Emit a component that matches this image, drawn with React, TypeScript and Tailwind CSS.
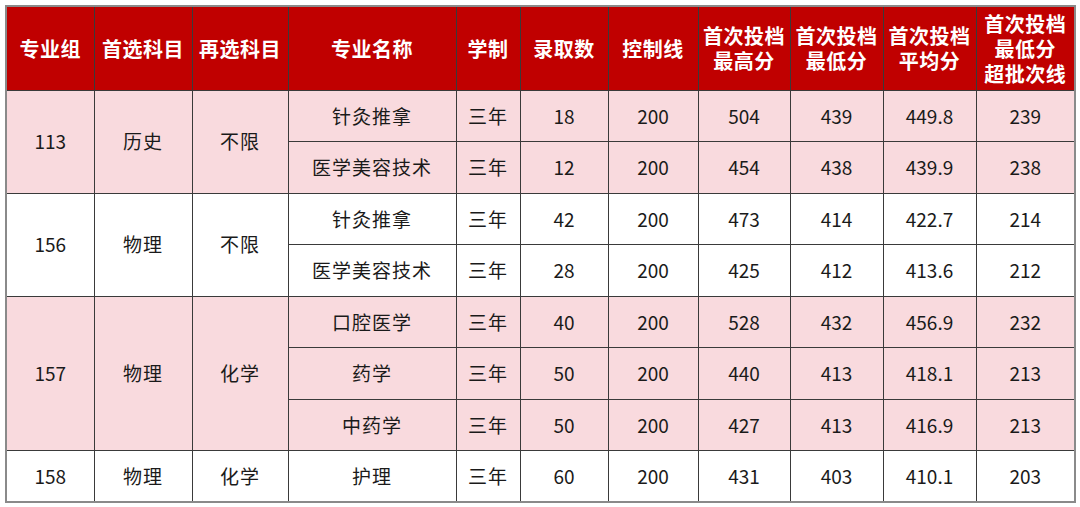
import React from "react";

type Row = {
  major: string; years: string; count: string; line: string;
  max: string; min: string; avg: string; over: string;
};

type Group = {
  code: string; first: string; second: string; pink: boolean; rows: Row[];
};

const groups: Group[] = [
  {
    code: "113", first: "历史", second: "不限", pink: true,
    rows: [
      { major: "针灸推拿", years: "三年", count: "18", line: "200", max: "504", min: "439", avg: "449.8", over: "239" },
      { major: "医学美容技术", years: "三年", count: "12", line: "200", max: "454", min: "438", avg: "439.9", over: "238" },
    ],
  },
  {
    code: "156", first: "物理", second: "不限", pink: false,
    rows: [
      { major: "针灸推拿", years: "三年", count: "42", line: "200", max: "473", min: "414", avg: "422.7", over: "214" },
      { major: "医学美容技术", years: "三年", count: "28", line: "200", max: "425", min: "412", avg: "413.6", over: "212" },
    ],
  },
  {
    code: "157", first: "物理", second: "化学", pink: true,
    rows: [
      { major: "口腔医学", years: "三年", count: "40", line: "200", max: "528", min: "432", avg: "456.9", over: "232" },
      { major: "药学", years: "三年", count: "50", line: "200", max: "440", min: "413", avg: "418.1", over: "213" },
      { major: "中药学", years: "三年", count: "50", line: "200", max: "427", min: "413", avg: "416.9", over: "213" },
    ],
  },
  {
    code: "158", first: "物理", second: "化学", pink: false,
    rows: [
      { major: "护理", years: "三年", count: "60", line: "200", max: "431", min: "403", avg: "410.1", over: "203" },
    ],
  },
];

const widths = [88, 98, 96, 168, 64, 88, 90, 92, 93, 93, 99];

const headers: string[][] = [
  ["专业组"], ["首选科目"], ["再选科目"], ["专业名称"], ["学制"], ["录取数"], ["控制线"],
  ["首次投档", "最高分"], ["首次投档", "最低分"], ["首次投档", "平均分"], ["首次投档", "最低分", "超批次线"],
];

const cell = "border border-[#3a3a3a] text-center align-middle p-0";

export default function App() {
  return (
    <div className="w-[1080px] h-[507px] bg-white pt-[5px] pl-[5px]" style={{ fontFamily: '"Noto Sans CJK SC", "Noto Sans", sans-serif' }}>
      <table className="table-fixed border-collapse border-2 border-[#8a8a8a] text-[19px] text-[#1a1a1a]" style={{ width: 1069 }}>
        <colgroup>
          {widths.map((w, i) => <col key={i} style={{ width: w }} />)}
        </colgroup>
        <thead>
          <tr className="h-[84px] bg-[#c00000] text-white">
            {headers.map((h, i) => (
              <th key={i} className={`${cell} text-[20px] font-bold leading-[25px] tracking-[0.5px]`}>
                {h.map((t) => <div key={t}>{t}</div>)}
              </th>
            ))}
          </tr>
        </thead>
        <tbody>
          {groups.map((g) =>
            g.rows.map((r, j) => (
              <tr key={g.code + j} className={`h-[51.5px] ${g.pink ? "bg-[#f9dade]" : "bg-white"}`}>
                {j === 0 && (
                  <>
                    <td rowSpan={g.rows.length} className={cell}>{g.code}</td>
                    <td rowSpan={g.rows.length} className={`${cell} tracking-[1px]`}>{g.first}</td>
                    <td rowSpan={g.rows.length} className={`${cell} tracking-[1px]`}>{g.second}</td>
                  </>
                )}
                <td className={`${cell} tracking-[1px]`}>{r.major}</td>
                <td className={`${cell} tracking-[1px]`}>{r.years}</td>
                <td className={cell}>{r.count}</td>
                <td className={cell}>{r.line}</td>
                <td className={cell}>{r.max}</td>
                <td className={cell}>{r.min}</td>
                <td className={cell}>{r.avg}</td>
                <td className={cell}>{r.over}</td>
              </tr>
            ))
          )}
        </tbody>
      </table>
    </div>
  );
}
